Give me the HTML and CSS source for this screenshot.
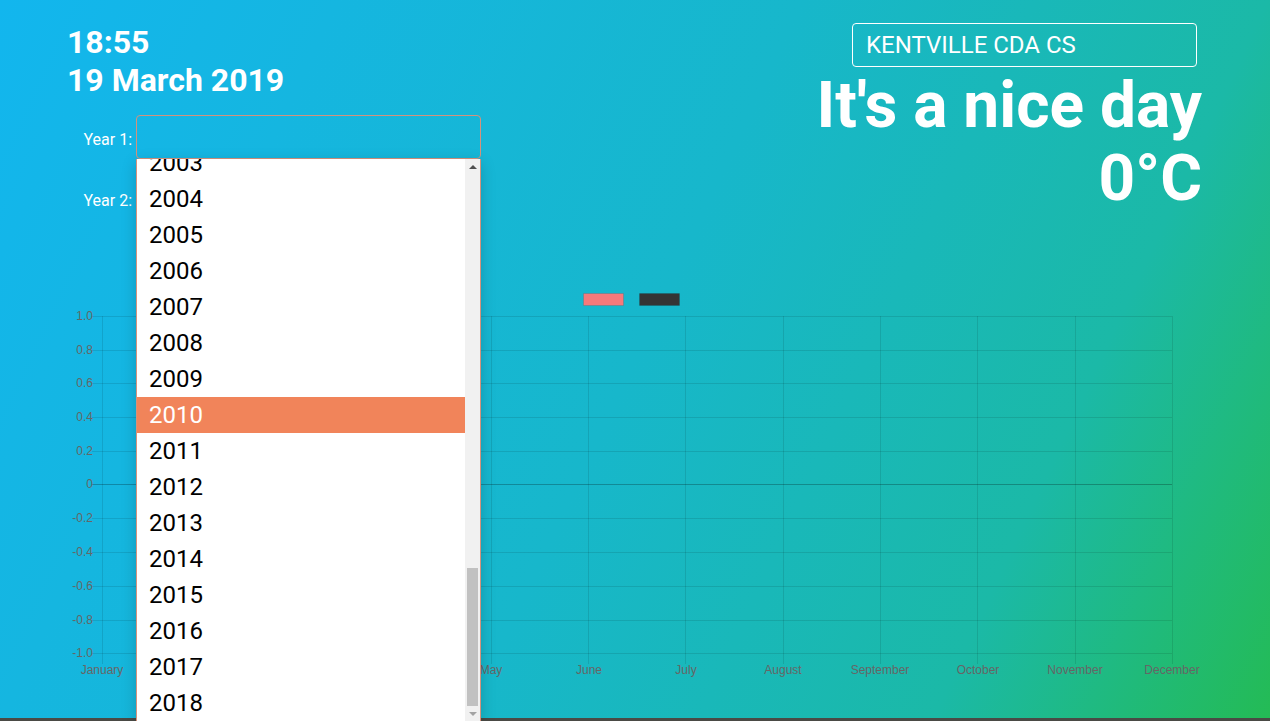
FILE: index.html
```html
<!DOCTYPE html>
<html lang="en">
<head>
<meta charset="utf-8">
<title>Weather</title>
<link rel="stylesheet" href="styles.css">
</head>
<body>
<div class="page">
  <header class="top">
    <section class="left">
      <div class="clock">
        <div class="time">18:55</div>
        <div class="date">19 March 2019</div>
      </div>
      <form class="years">
        <div class="field">
          <label class="field-label">Year 1:</label>
          <div class="select-wrap">
            <div class="select select-open"></div>
            <div class="listbox">
              <div class="options">
                <div class="opt">2003</div>
                <div class="opt">2004</div>
                <div class="opt">2005</div>
                <div class="opt">2006</div>
                <div class="opt">2007</div>
                <div class="opt">2008</div>
                <div class="opt">2009</div>
                <div class="opt opt-active">2010</div>
                <div class="opt">2011</div>
                <div class="opt">2012</div>
                <div class="opt">2013</div>
                <div class="opt">2014</div>
                <div class="opt">2015</div>
                <div class="opt">2016</div>
                <div class="opt">2017</div>
                <div class="opt">2018</div>
              </div>
              <div class="scrollbar">
                <div class="sb-btn"><span class="tri tri-up"></span></div>
                <div class="sb-track"><span class="sb-thumb"></span></div>
                <div class="sb-btn"><span class="tri tri-down"></span></div>
              </div>
            </div>
          </div>
        </div>
        <div class="field">
          <label class="field-label">Year 2:</label>
          <div class="select-wrap">
            <div class="select"></div>
          </div>
        </div>
      </form>
    </section>
    <section class="right">
      <div class="station">KENTVILLE CDA CS</div>
      <h1 class="headline">It's a nice day<br>0°C</h1>
    </section>
  </header>
  <main class="chart">
    <svg class="chart-svg" width="1270" height="400" viewBox="0 0 1270 400">
      <g transform="translate(0,-285)">
        <rect x="583.5" y="293.5" width="40" height="12" fill="#f6797b" stroke="rgba(0,0,0,0.1)"/>
        <rect x="639.5" y="293.5" width="40" height="12" fill="#343434" stroke="rgba(0,0,0,0.1)"/>
        <g stroke="rgba(0,0,0,0.1)" stroke-width="1">
          <line x1="92" y1="316.5" x2="1172" y2="316.5"/>
          <line x1="92" y1="350.5" x2="1172" y2="350.5"/>
          <line x1="92" y1="383.5" x2="1172" y2="383.5"/>
          <line x1="92" y1="417.5" x2="1172" y2="417.5"/>
          <line x1="92" y1="451.5" x2="1172" y2="451.5"/>
          <line x1="92" y1="518.5" x2="1172" y2="518.5"/>
          <line x1="92" y1="552.5" x2="1172" y2="552.5"/>
          <line x1="92" y1="586.5" x2="1172" y2="586.5"/>
          <line x1="92" y1="620.5" x2="1172" y2="620.5"/>
          <line x1="92" y1="653.5" x2="1172" y2="653.5"/>
          <line x1="102.5" y1="316" x2="102.5" y2="664"/>
          <line x1="199.5" y1="316" x2="199.5" y2="664"/>
          <line x1="296.5" y1="316" x2="296.5" y2="664"/>
          <line x1="394.5" y1="316" x2="394.5" y2="664"/>
          <line x1="491.5" y1="316" x2="491.5" y2="664"/>
          <line x1="588.5" y1="316" x2="588.5" y2="664"/>
          <line x1="685.5" y1="316" x2="685.5" y2="664"/>
          <line x1="783.5" y1="316" x2="783.5" y2="664"/>
          <line x1="880.5" y1="316" x2="880.5" y2="664"/>
          <line x1="977.5" y1="316" x2="977.5" y2="664"/>
          <line x1="1075.5" y1="316" x2="1075.5" y2="664"/>
          <line x1="1172.5" y1="316" x2="1172.5" y2="664"/>
        </g>
        <line x1="92" y1="484.5" x2="1172" y2="484.5" stroke="rgba(0,0,0,0.25)" stroke-width="1"/>
        <g class="axis-text" text-anchor="end">
          <text x="93" y="320">1.0</text>
          <text x="93" y="354">0.8</text>
          <text x="93" y="387">0.6</text>
          <text x="93" y="421">0.4</text>
          <text x="93" y="455">0.2</text>
          <text x="93" y="488">0</text>
          <text x="93" y="522">-0.2</text>
          <text x="93" y="556">-0.4</text>
          <text x="93" y="590">-0.6</text>
          <text x="93" y="624">-0.8</text>
          <text x="93" y="657">-1.0</text>
        </g>
        <g class="axis-text" text-anchor="middle">
          <text x="102" y="674">January</text>
          <text x="199" y="674">February</text>
          <text x="297" y="674">March</text>
          <text x="394" y="674">April</text>
          <text x="491" y="674">May</text>
          <text x="589" y="674">June</text>
          <text x="686" y="674">July</text>
          <text x="783" y="674">August</text>
          <text x="880" y="674">September</text>
          <text x="978" y="674">October</text>
          <text x="1075" y="674">November</text>
          <text x="1172" y="674">December</text>
        </g>
      </g>
    </svg>
  </main>
</div>
<div class="footer-bar"></div>
</body>
</html>
```

FILE: styles.css
```css
html, body {
  margin: 0;
  padding: 0;
}

body {
  font-family: Roboto, "Noto Sans", sans-serif;
  color: #fff;
  overflow: hidden;
}

.page {
  height: 718px;
  background: linear-gradient(115deg, #12b6ee 0%, #15b6e0 21%, #17b7cb 50%, #1bb9a7 79%, #24bb55 100%);
}

.top {
  display: flex;
  justify-content: space-between;
  align-items: flex-start;
  padding: 0 68px 0 67px;
  height: 220px;
}

.left {
  padding-top: 23px;
}

.clock {
  font-weight: 700;
  font-size: 32px;
  line-height: 38px;
}

.years {
  margin-top: 16px;
  display: flex;
  flex-direction: column;
  gap: 17px;
}

.field {
  display: flex;
  align-items: center;
}

.field-label {
  width: 65px;
  margin-right: 4px;
  padding-top: 4px;
  text-align: right;
  font-size: 16px;
}

.select-wrap {
  position: relative;
  width: 345px;
  height: 44px;
}

.select {
  box-sizing: border-box;
  width: 345px;
  height: 44px;
  border: 1px solid #fff;
  border-radius: 4px;
}

.select-open {
  border-color: #d4927d;
}

.listbox {
  position: absolute;
  top: 44px;
  left: 0;
  z-index: 5;
  box-sizing: border-box;
  width: 345px;
  height: 562px;
  display: flex;
  background: #fff;
  border: 1px solid #d4927d;
  border-top: none;
  border-bottom: none;
  box-shadow: 0 4px 14px rgba(0, 0, 0, 0.18);
  color: #000;
}

.options {
  flex: 1;
  overflow: hidden;
}

.options .opt:first-child {
  margin-top: -14px;
}

.opt {
  height: 36px;
  line-height: 36px;
  padding-left: 12px;
  font-size: 24px;
}

.opt-active {
  background: #f1845a;
  color: #fff;
}

.scrollbar {
  width: 15px;
  display: flex;
  flex-direction: column;
  background: #f1f1f1;
}

.sb-btn {
  height: 15px;
  display: flex;
  align-items: center;
  justify-content: center;
}

.tri {
  width: 0;
  height: 0;
  border-left: 4px solid transparent;
  border-right: 4px solid transparent;
}

.tri-up {
  border-bottom: 4px solid #505050;
}

.tri-down {
  border-top: 4px solid #a3a3a3;
}

.sb-track {
  flex: 1;
  display: flex;
  flex-direction: column;
  justify-content: flex-end;
  padding: 0 2px;
}

.sb-thumb {
  display: block;
  height: 138px;
  background: #c1c1c1;
}

.right {
  padding-top: 23px;
  display: flex;
  flex-direction: column;
  align-items: flex-end;
}

.station {
  box-sizing: border-box;
  width: 345px;
  height: 44px;
  margin-right: 5px;
  padding-left: 13px;
  border: 1px solid #fff;
  border-radius: 4px;
  font-size: 24px;
  line-height: 42px;
}

.headline {
  margin: 2px 0 0;
  font-size: 64px;
  font-weight: 700;
  line-height: 73px;
  text-align: right;
}

.chart {
  margin-top: 65px;
}

.chart-svg {
  display: block;
}

.axis-text {
  font-family: "Liberation Sans", Arial, sans-serif;
  font-size: 12px;
  fill: #666;
}

.footer-bar {
  height: 3px;
  background: #4a4a45;
}
```
